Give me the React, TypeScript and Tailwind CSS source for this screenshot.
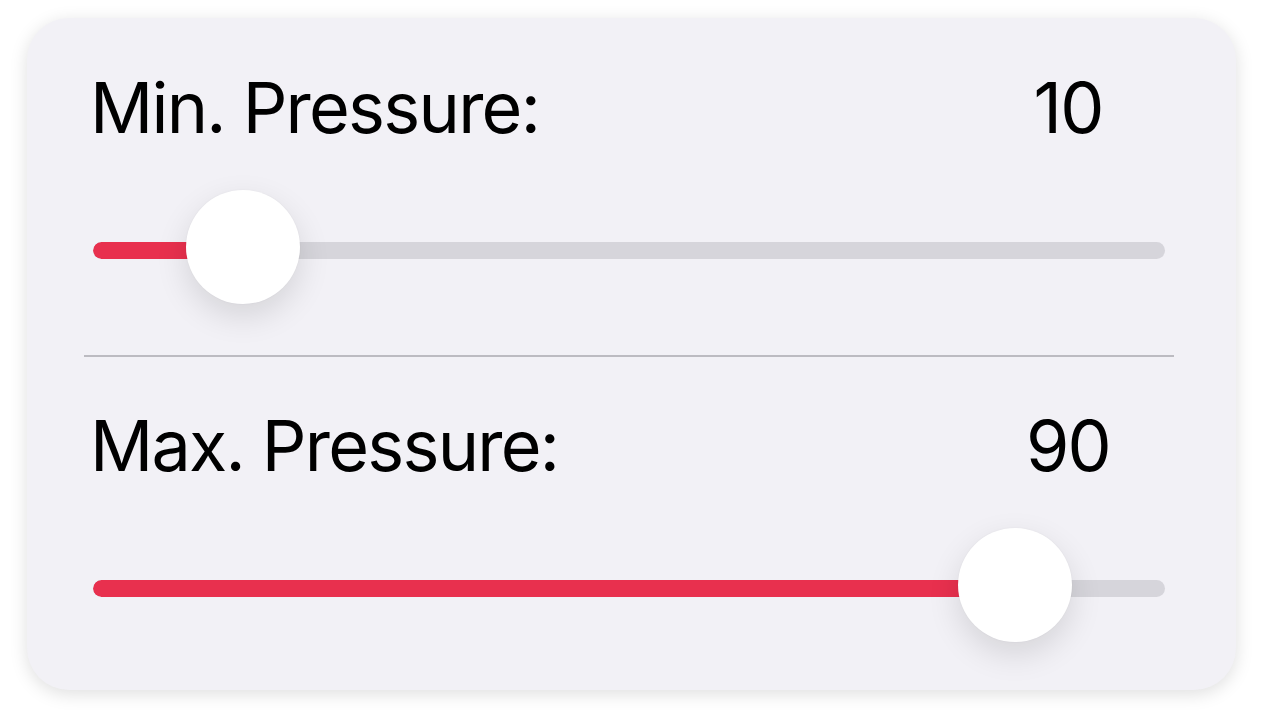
import React from "react";

type PressureSliderProps = {
  label: string;
  value: number;
  className?: string;
};

// the thumb travels inside the track, inset by this much on each side
const THUMB_INSET = 54;

const PressureSlider = ({ label, value, className }: PressureSliderProps) => {
  const pos = `calc(${THUMB_INSET}px + (100% - ${THUMB_INSET * 2}px) * ${value / 100})`;

  return (
    <div className={className}>
      <div className="flex items-center justify-between h-[70px] text-[70px] leading-[70px] tracking-[-0.025em] text-black">
        <span className="-ml-[3px]">{label}</span>
        <span className="w-[120px] mr-[37px] text-center">{value}</span>
      </div>
      <div className="relative h-[114px] mt-[47px] pt-[52px]">
        <div className="h-[17px] rounded-full bg-[#d6d5db] overflow-hidden">
          <div className="h-full bg-[#e8304e] rounded-l-full" style={{ width: pos }} />
        </div>
        <div
          className="absolute top-0 w-[114px] h-[114px] -translate-x-1/2 rounded-full bg-white shadow-[0_12px_32px_rgba(0,0,0,0.12),0_0_2px_rgba(0,0,0,0.05)]"
          style={{ left: pos }}
        />
      </div>
    </div>
  );
};

export default function App() {
  return (
    <div
      className="min-h-screen bg-white pt-[18px] pl-[27px]"
      style={{ fontFamily: "Inter, 'Noto Sans', sans-serif" }}
    >
      <div className="w-[1209px] h-[672px] rounded-[42px] bg-[#f2f1f6] shadow-[0_4px_18px_rgba(0,0,0,0.13)]">
        <PressureSlider
          label="Min. Pressure:"
          value={10}
          className="pl-[66px] pr-[71px] pt-[55px] pb-[51px]"
        />
        <div className="ml-[57px] mr-[62px] h-[2px] bg-[#bcbbc1]" />
        <PressureSlider
          label="Max. Pressure:"
          value={90}
          className="pl-[66px] pr-[71px] pt-[54px] pb-[48px]"
        />
      </div>
    </div>
  );
}
